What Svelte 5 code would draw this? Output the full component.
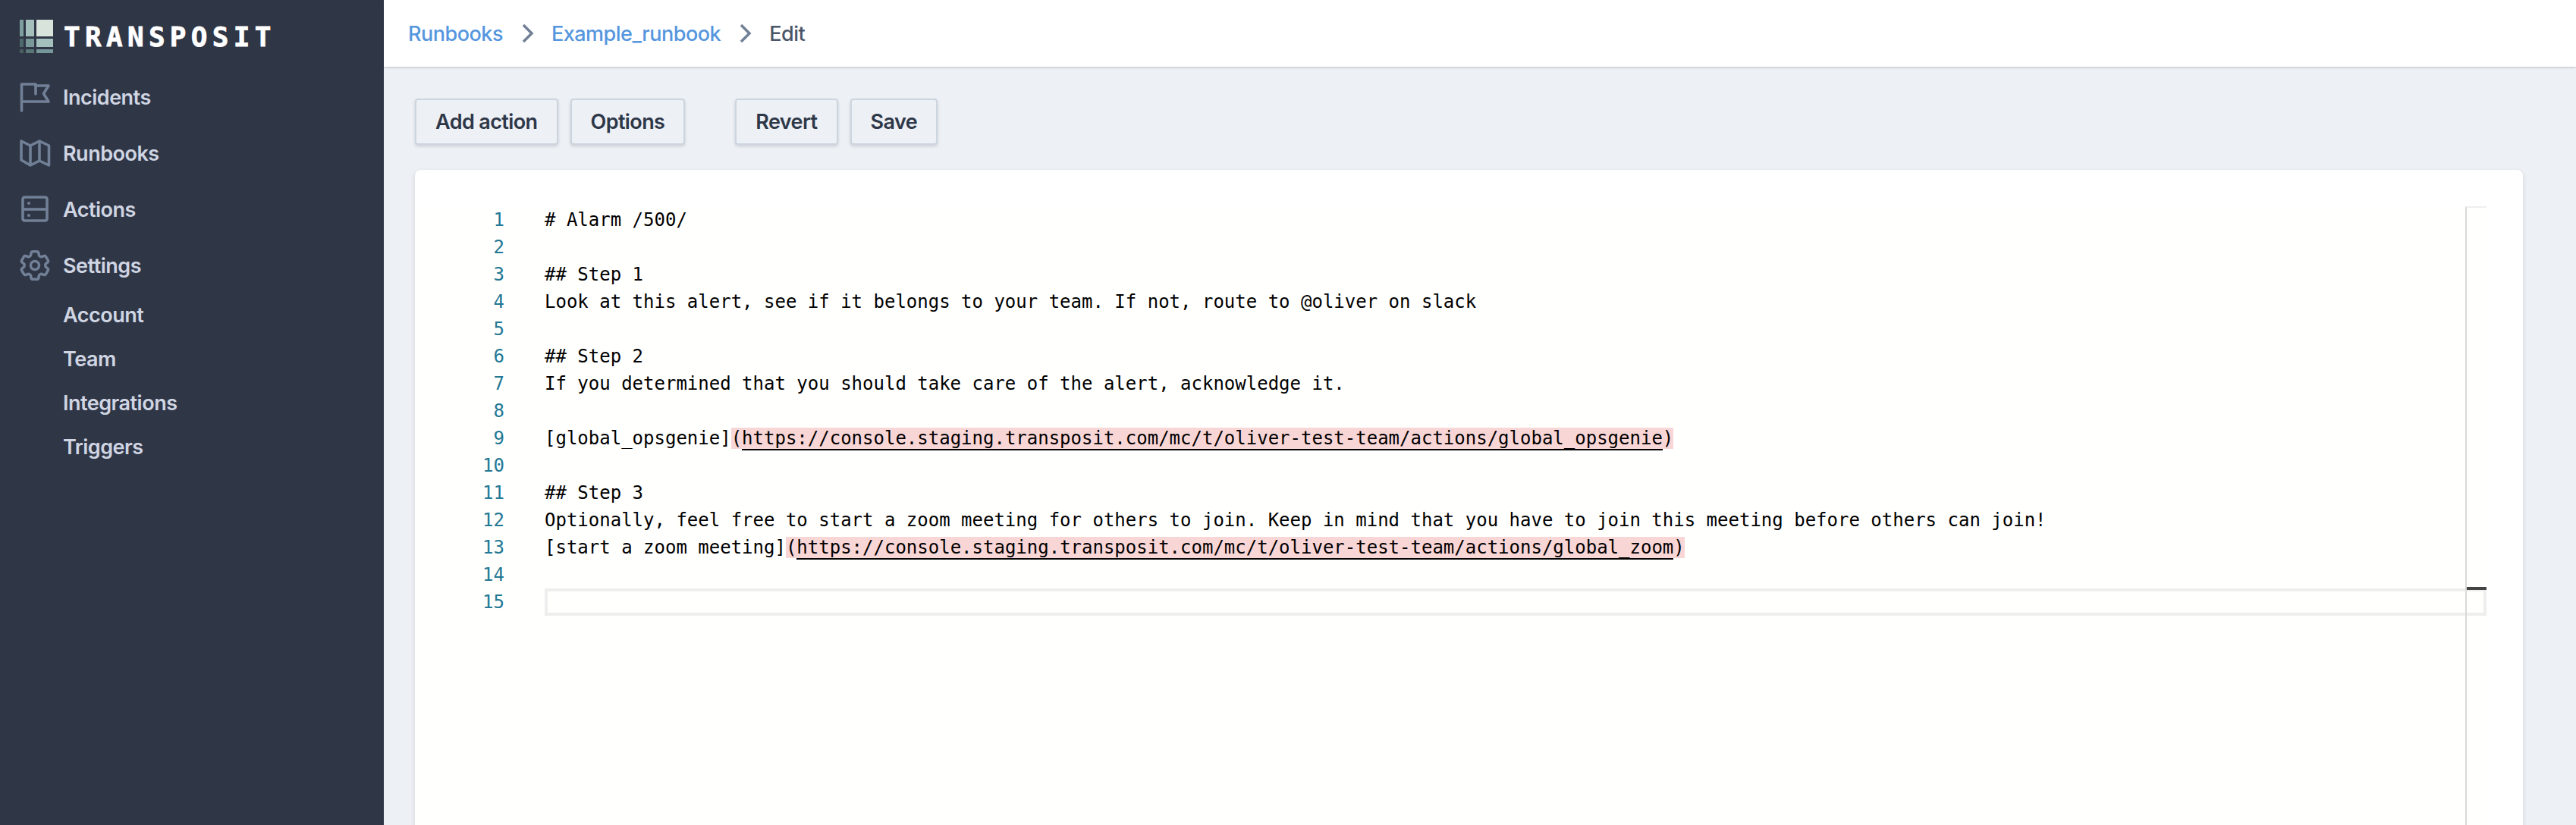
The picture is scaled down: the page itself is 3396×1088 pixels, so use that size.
<script>
  const nav = [
    { label: 'Incidents', icon: 'flag' },
    { label: 'Runbooks', icon: 'map' },
    { label: 'Actions', icon: 'server' },
    { label: 'Settings', icon: 'cog' }
  ];
  const subNav = ['Account', 'Team', 'Integrations', 'Triggers'];
  const base = 'https://console.staging.transposit.com/mc/t/oliver-test-team/actions/';
  const lines = [
    { text: '# Alarm /500/' },
    { text: '' },
    { text: '## Step 1' },
    { text: 'Look at this alert, see if it belongs to your team. If not, route to @oliver on slack' },
    { text: '' },
    { text: '## Step 2' },
    { text: 'If you determined that you should take care of the alert, acknowledge it.' },
    { text: '' },
    { text: '[global_opsgenie]', url: base + 'global_opsgenie' },
    { text: '' },
    { text: '## Step 3' },
    { text: 'Optionally, feel free to start a zoom meeting for others to join. Keep in mind that you have to join this meeting before others can join!' },
    { text: '[start a zoom meeting]', url: base + 'global_zoom' },
    { text: '' },
    { text: '' }
  ];
</script>

<div class="page">
  <aside class="sidebar">
    <div class="logo">
      <svg width="44" height="44" viewBox="0 0 44 44">
        <rect x="0" y="0" width="5" height="22" fill="#7f9f9e" />
        <rect x="8" y="0" width="11" height="22" fill="#a5bfbd" />
        <rect x="22" y="0" width="22" height="22" fill="#d8e3dc" />
        <rect x="0" y="25" width="5" height="11" fill="#4f6a6c" />
        <rect x="8" y="25" width="11" height="11" fill="#7a9897" />
        <rect x="22" y="25" width="22" height="11" fill="#a4c0bd" />
        <rect x="0" y="39" width="5" height="5" fill="#4a5f60" />
        <rect x="8" y="39" width="11" height="5" fill="#5a7676" />
        <rect x="22" y="39" width="22" height="5" fill="#77989a" />
      </svg>
      <span class="logo-text">TRANSPOSIT</span>
    </div>
    <nav>
      {#each nav as item}
        <div class="nav-item">
          <span class="nav-icon">
            {#if item.icon === 'flag'}
              <svg width="44" height="44" viewBox="0 0 44 44" fill="none" stroke="#718096" stroke-width="3.600" stroke-linejoin="round" stroke-linecap="round">
                <path d="M2.500 40V5H21V18" />
                <path d="M21 7H38L31.500 17.500L38 28H2.500" />
              </svg>
            {:else if item.icon === 'map'}
              <svg width="44" height="44" viewBox="0 0 44 44" fill="none" stroke="#718096" stroke-width="3.600" stroke-linejoin="round">
                <path d="M2 6L14 12L26 6L38.500 12V38L26 32L14 38L2 31Z" />
                <path d="M14 12V38M26 6V32" />
              </svg>
            {:else if item.icon === 'server'}
              <svg width="44" height="44" viewBox="0 0 44 44" fill="none" stroke="#718096" stroke-width="3.600" stroke-linejoin="round">
                <rect x="4" y="6" width="32" height="31" rx="2.500" />
                <path d="M4 22H36" />
                <circle cx="12" cy="14" r="2" fill="#718096" stroke="none" />
                <circle cx="12" cy="30" r="2" fill="#718096" stroke="none" />
              </svg>
            {:else}
              <svg width="44" height="44" viewBox="2.200 1.200 21.600 21.600" fill="none" stroke="#718096" stroke-width="1.750" stroke-linejoin="round">
                <path d="M9.594 3.94c.09-.542.56-.94 1.11-.94h2.593c.55 0 1.02.398 1.11.94l.213 1.281c.063.374.313.686.645.87.074.04.147.083.22.127.325.196.72.257 1.075.124l1.217-.456a1.125 1.125 0 0 1 1.37.49l1.296 2.247a1.125 1.125 0 0 1-.26 1.431l-1.003.827c-.293.241-.438.613-.43.992a7.723 7.723 0 0 1 0 .255c-.008.378.137.75.43.991l1.004.827c.424.35.534.955.26 1.43l-1.298 2.247a1.125 1.125 0 0 1-1.369.491l-1.217-.456c-.355-.133-.75-.072-1.076.124a6.47 6.47 0 0 1-.22.128c-.331.183-.581.495-.644.869l-.213 1.281c-.09.543-.56.94-1.11.94h-2.594c-.55 0-1.019-.398-1.11-.94l-.213-1.281c-.062-.374-.312-.686-.644-.87a6.52 6.52 0 0 1-.22-.127c-.325-.196-.72-.257-1.076-.124l-1.217.456a1.125 1.125 0 0 1-1.369-.49l-1.297-2.247a1.125 1.125 0 0 1 .26-1.431l1.004-.827c.292-.24.437-.613.43-.991a6.932 6.932 0 0 1 0-.255c.007-.38-.138-.751-.43-.992l-1.004-.827a1.125 1.125 0 0 1-.26-1.43l1.297-2.247a1.125 1.125 0 0 1 1.37-.491l1.216.456c.356.133.751.072 1.076-.124.072-.044.146-.086.22-.128.332-.183.582-.495.644-.869l.214-1.28Z" />
                <circle cx="12" cy="12" r="2.700" />
              </svg>
            {/if}
          </span>
          {item.label}
        </div>
      {/each}
      <div class="sub-nav">
        {#each subNav as label}
          <div class="sub-item">{label}</div>
        {/each}
      </div>
    </nav>
  </aside>

  <main>
    <header>
      <a href="#runbooks">Runbooks</a>
      <svg class="chev" width="16" height="24" viewBox="0 0 16 24" fill="none" stroke="#718096" stroke-width="3.500"><path d="M2 1l11 11L2 23" /></svg>
      <a href="#example">Example_runbook</a>
      <svg class="chev" width="16" height="24" viewBox="0 0 16 24" fill="none" stroke="#718096" stroke-width="3.500"><path d="M2 1l11 11L2 23" /></svg>
      <span class="current">Edit</span>
    </header>

    <div class="content">
      <div class="toolbar">
        <div class="group">
          <button type="button">Add action</button>
          <button type="button">Options</button>
        </div>
        <div class="group">
          <button type="button">Revert</button>
          <button type="button">Save</button>
        </div>
      </div>

      <div class="card">
        <div class="editor">
          {#each lines as line, i}
            <div class="row">
              <span class="num">{i + 1}</span>
              <span class="code">{line.text}{#if line.url}<span class="link">(<span class="url">{line.url}</span>)</span>{/if}</span>
            </div>
          {/each}
          <div class="current-line"></div>
          <div class="ruler"><div class="cursor-mark"></div></div>
        </div>
      </div>
    </div>
  </main>
</div>

<style>
  :global(body) {
    margin: 0;
    background: #edf0f5;
  }

  .page {
    display: flex;
    height: 1088px;
    overflow: hidden;
    font-family: Inter, "Noto Sans", sans-serif;
  }

  .sidebar {
    width: 506px;
    flex: none;
    background: #2f3646;
    box-sizing: border-box;
    padding: 26px 0 0 26px;
    color: #cfd5e2;
  }

  .logo {
    display: flex;
    align-items: center;
    gap: 14px;
    height: 44px;
    margin-bottom: 21px;
  }

  .logo-text {
    font-family: "DejaVu Sans Mono", monospace;
    font-weight: 700;
    font-size: 36px;
    letter-spacing: 6.300px;
    -webkit-text-stroke: 0.8px #fff;
    color: #fff;
    line-height: 1;
    padding-top: 2px;
  }

  .nav-item {
    display: flex;
    align-items: center;
    height: 74px;
    font-size: 27px;
    font-weight: 600;
    letter-spacing: -0.5px;
  }

  .nav-icon {
    width: 57px;
    height: 44px;
    display: block;
  }

  .sub-nav {
    padding-left: 57px;
  }

  .sub-item {
    height: 58px;
    line-height: 58px;
    font-size: 27px;
    font-weight: 600;
    letter-spacing: -0.5px;
  }

  main {
    flex: 1;
    min-width: 0;
  }

  header {
    height: 88px;
    background: #fff;
    box-shadow: 0 1px 3px rgba(0, 0, 0, 0.2);
    display: flex;
    align-items: center;
    padding-left: 32px;
    font-size: 27px;
    font-weight: 500;
    letter-spacing: -0.5px;
    position: relative;
  }

  header a {
    color: #5596de;
    text-decoration: none;
  }

  .chev {
    margin: 0 23px 0 25px;
  }

  .current {
    color: #4a5568;
  }

  .content {
    padding: 42px 70px 0 41px;
  }

  .toolbar {
    display: flex;
    gap: 66px;
    margin-bottom: 33px;
  }

  .group {
    display: flex;
    gap: 16px;
  }

  button {
    height: 61px;
    padding: 0 25px;
    background: #edf0f5;
    border: 2px solid #cbd5e0;
    border-radius: 4px;
    box-shadow: 0 2px 4px rgba(0, 0, 0, 0.14);
    font: 600 27px Inter, sans-serif;
    letter-spacing: -0.6px;
    color: #2d3748;
  }

  .card {
    background: #fff;
    border-radius: 8px;
    box-shadow: 0 2px 6px rgba(0, 0, 0, 0.12);
    padding: 48px 48px 0 0;
    height: 900px;
    box-sizing: border-box;
  }

  .editor {
    position: relative;
    height: 852px;
    background: #fffffe;
    font-family: "DejaVu Sans Mono", monospace;
    font-size: 24px;
    line-height: 36px;
    color: #000;
  }

  .row {
    display: flex;
    height: 36px;
    white-space: pre;
  }

  .num {
    width: 118px;
    margin-right: 53px;
    text-align: right;
    color: #237893;
    flex: none;
  }

  .link {
    background: #f9d6d6;
  }

  .url {
    border-bottom: 2px solid #000;
  }

  .current-line {
    position: absolute;
    left: 171px;
    right: 0;
    top: 504px;
    height: 36px;
    box-sizing: border-box;
    border: 4px solid #eee;
  }

  .ruler {
    position: absolute;
    top: 0;
    right: 0;
    bottom: 0;
    width: 28px;
    box-sizing: border-box;
    border-left: 2px solid #d8d8d8;
    border-top: 2px solid #eee;
  }

  .cursor-mark {
    position: absolute;
    top: 500px;
    left: 0;
    right: 0;
    height: 4px;
    background: #444;
  }
</style>
